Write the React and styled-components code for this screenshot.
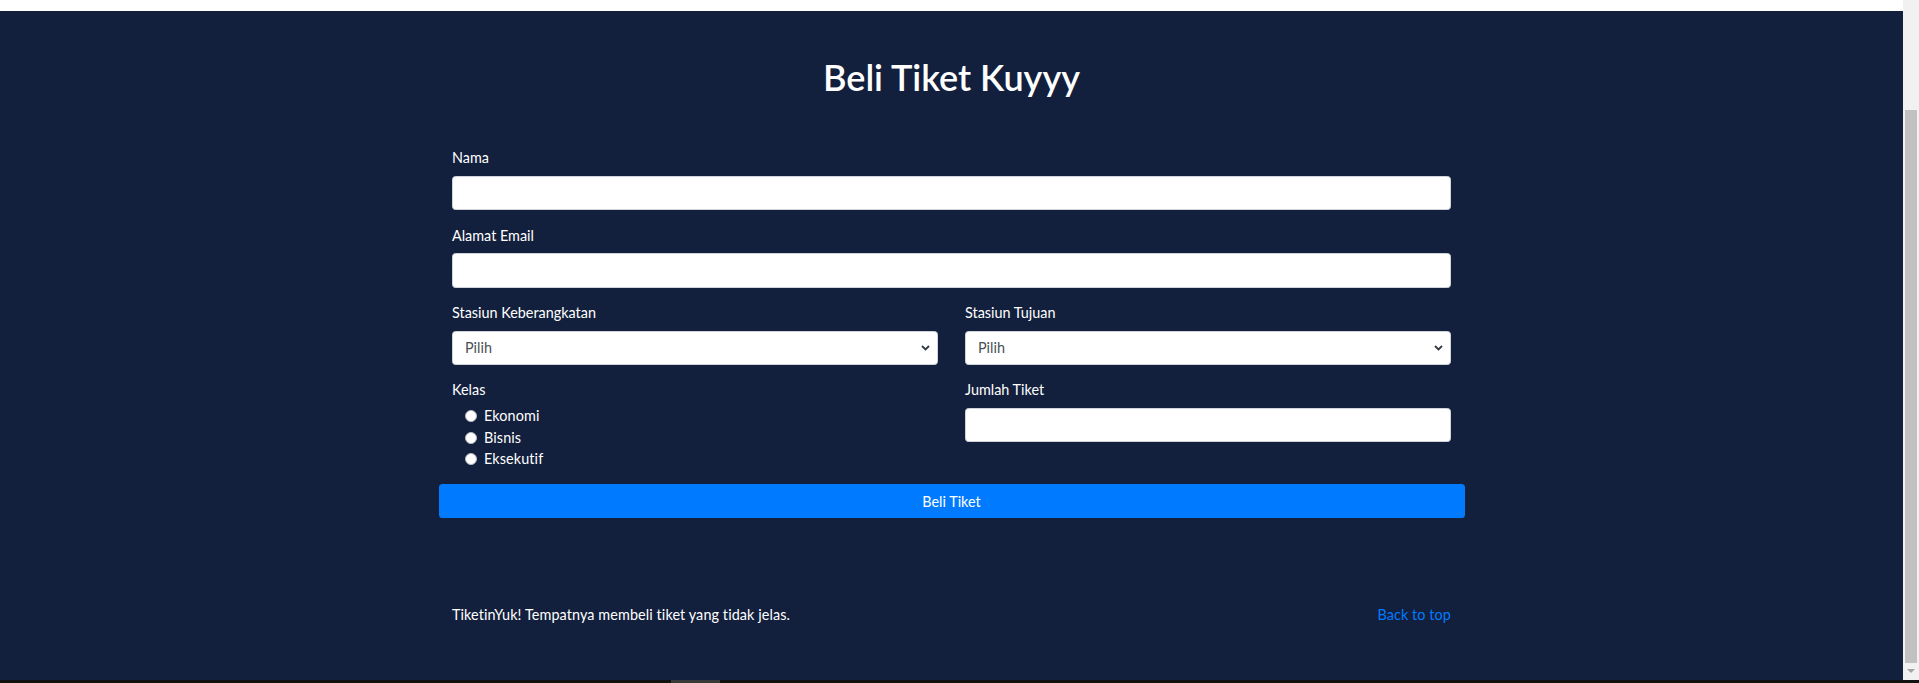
import React from 'react'
import styled, { createGlobalStyle } from 'styled-components'

const GlobalStyle = createGlobalStyle`
    html, body {
        margin: 0;
        padding: 0;
        overflow: hidden;
        background: #ffffff;
    }
    * {
        box-sizing: border-box;
    }
`

const App = () => {
    return (
        <Page>
            <GlobalStyle />
            <Window>
                <Main>
                    <TopStrip />
                    <Section>
                        <Title>Beli Tiket Kuyyy</Title>
                        <Container>
                            <Inner>
                                <Group>
                                    <Label>Nama</Label>
                                    <Input type="text" />
                                </Group>
                                <Group>
                                    <Label>Alamat Email</Label>
                                    <Input type="email" />
                                </Group>
                                <Row>
                                    <Group>
                                        <Label>Stasiun Keberangkatan</Label>
                                        <SelectWrap>
                                            <Select defaultValue="">
                                                <option value="">Pilih</option>
                                            </Select>
                                            <Chevron />
                                        </SelectWrap>
                                    </Group>
                                    <Group>
                                        <Label>Stasiun Tujuan</Label>
                                        <SelectWrap>
                                            <Select defaultValue="">
                                                <option value="">Pilih</option>
                                            </Select>
                                            <Chevron />
                                        </SelectWrap>
                                    </Group>
                                    <Group>
                                        <Label>Kelas</Label>
                                        <RadioList>
                                            <RadioItem><Radio type="radio" name="kelas" />Ekonomi</RadioItem>
                                            <RadioItem><Radio type="radio" name="kelas" />Bisnis</RadioItem>
                                            <RadioItem><Radio type="radio" name="kelas" />Eksekutif</RadioItem>
                                        </RadioList>
                                    </Group>
                                    <Group>
                                        <Label>Jumlah Tiket</Label>
                                        <Input type="number" />
                                    </Group>
                                </Row>
                            </Inner>
                            <Button type="button">Beli Tiket</Button>
                            <Footer>
                                <span>TiketinYuk! Tempatnya membeli tiket yang tidak jelas.</span>
                                <TopLink href="#">Back to top</TopLink>
                            </Footer>
                        </Container>
                    </Section>
                </Main>
                <Scrollbar>
                    <Thumb />
                    <ArrowDown />
                </Scrollbar>
            </Window>
            <BottomStrip>
                <BottomPiece />
            </BottomStrip>
        </Page>
    )
}

const Chevron = () => (
    <ChevronBox width="9" height="6" viewBox="0 0 9 6">
        <path d="M1 1l3.5 3.5L8 1" fill="none" stroke="#343a40" strokeWidth="1.8" />
    </ChevronBox>
)

// styled
const Page = styled.div`
    width: 1919px;
    height: 683px;
    display: flex;
    flex-direction: column;
    font-family: "Segoe UI", Lato, "Noto Sans", sans-serif;
    font-size: 14.4px;
    line-height: 1.5;
    color: #ffffff;
`

const Window = styled.div`
    display: flex;
    height: 680px;
`

const Main = styled.div`
    flex: 1;
    display: flex;
    flex-direction: column;
`

const TopStrip = styled.div`
    height: 11px;
    background: #ffffff;
`

const Section = styled.div`
    flex: 1;
    background: #13203d;
    padding-top: 45px;
`

const Title = styled.h1`
    margin: 0 0 48px;
    text-align: center;
    font-size: 36px;
    font-weight: 600;
    line-height: 1.2;
`

const Container = styled.div`
    width: 1026px;
    margin: 0 auto;
`

const Inner = styled.div`
    padding: 0 13.5px;
`

const Group = styled.div`
    margin-bottom: 14.4px;
`

const Row = styled.div`
    display: grid;
    grid-template-columns: 1fr 1fr;
    column-gap: 27px;
`

const Label = styled.label`
    display: block;
    margin-bottom: 7.2px;
`

const Input = styled.input`
    display: block;
    width: 100%;
    height: 34.2px;
    padding: 5px 11px;
    font: inherit;
    color: #495057;
    background: #ffffff;
    border: 1px solid #ced4da;
    border-radius: 3.6px;
    outline: none;
`

const SelectWrap = styled.div`
    position: relative;
`

const Select = styled.select`
    display: block;
    width: 100%;
    height: 34.2px;
    padding: 0 28px 0 12px;
    font: inherit;
    color: #495057;
    background: #ffffff;
    border: 1px solid #ced4da;
    border-radius: 3.6px;
    appearance: none;
    outline: none;
`

const ChevronBox = styled.svg`
    position: absolute;
    right: 8px;
    top: 14px;
    pointer-events: none;
`

const RadioList = styled.div`
    margin-top: -3px;
    padding-left: 13px;
`

const RadioItem = styled.label`
    display: flex;
    align-items: center;
    height: 21.6px;
    letter-spacing: 0.1px;
`

const Radio = styled.input`
    appearance: none;
    width: 12px;
    height: 12px;
    margin: 0 7px 0 0;
    border-radius: 50%;
    background: #ffffff;
    border: 1px solid #b8bcc4;
`

const Button = styled.button`
    display: block;
    width: 100%;
    height: 34.2px;
    font: inherit;
    color: #ffffff;
    background: #007bff;
    border: none;
    border-radius: 3.6px;
`

const Footer = styled.div`
    display: flex;
    justify-content: space-between;
    padding: 86px 13.5px 0;
    letter-spacing: 0.1px;
`

const TopLink = styled.a`
    color: #007bff;
    text-decoration: none;
`

const Scrollbar = styled.div`
    width: 16px;
    background: #f1f1f1;
    display: flex;
    flex-direction: column;
    align-items: center;
    padding-top: 110px;
`

const Thumb = styled.div`
    width: 12px;
    height: 553px;
    background: #c1c1c1;
`

const ArrowDown = styled.div`
    margin-top: 6px;
    width: 0;
    height: 0;
    border-left: 4px solid transparent;
    border-right: 4px solid transparent;
    border-top: 4px solid #a3a3a3;
`

const BottomStrip = styled.div`
    height: 3px;
    background: #111111;
    padding-left: 671px;
`

const BottomPiece = styled.div`
    width: 49px;
    height: 3px;
    background: #3a3a3a;
`

export default App
